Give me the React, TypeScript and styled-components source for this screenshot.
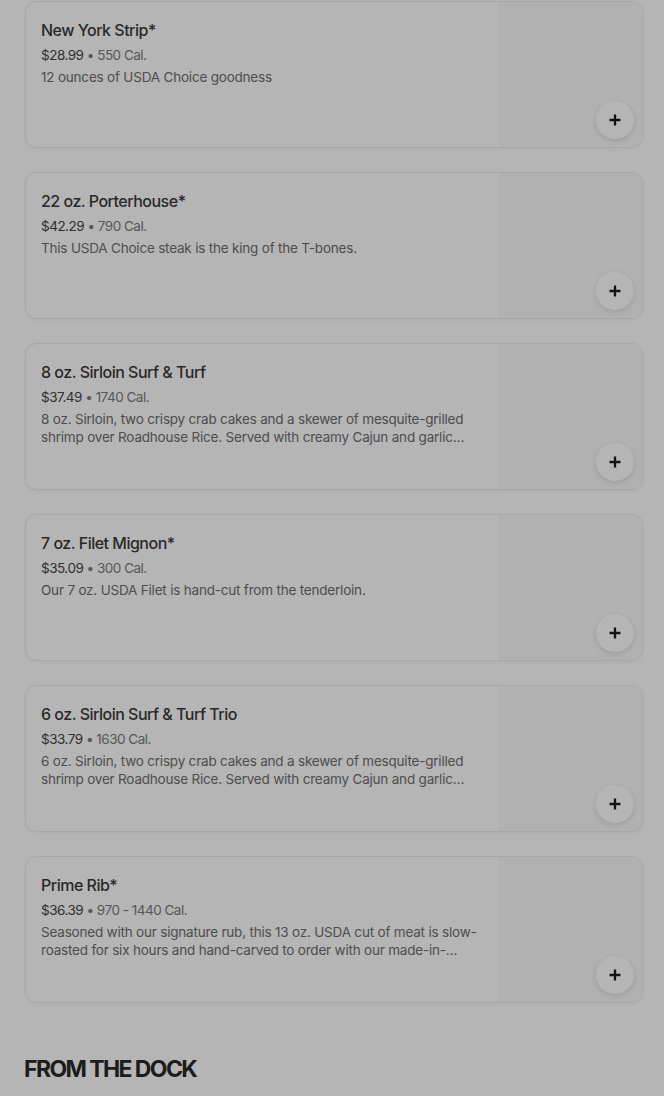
import React from "react";
import styled, { createGlobalStyle } from "styled-components";

const Global = createGlobalStyle`
  html, body { margin: 0; padding: 0; background: #ffffff; }
  body { font-family: Inter, "Noto Sans", Roboto, sans-serif; -webkit-font-smoothing: antialiased; }
`;

const Page = styled.main`
  width: 664px;
  padding: 1px 21px 40px 25px;
  box-sizing: border-box;
  display: flex;
  flex-direction: column;
  gap: 24px;
`;

const Card = styled.article`
  display: flex;
  height: 147px;
  box-sizing: border-box;
  border: 1px solid #ececec;
  border-radius: 12px;
  box-shadow: 0 1px 4px rgba(0, 0, 0, 0.05);
  background: #ffffff;
  overflow: hidden;
  position: relative;
`;

const Info = styled.div`
  flex: 1;
  min-width: 0;
  padding: 16px 16px 0 15px;
  display: flex;
  flex-direction: column;
`;

const Title = styled.h3`
  margin: 0;
  font-size: 16px;
  line-height: 24px;
  font-weight: 500;
  color: #3a3a3a;
  letter-spacing: -0.5px;
`;

const Meta = styled.div`
  margin-top: 4px;
  font-size: 13.5px;
  line-height: 18px;
  color: #7c7c7c;
  letter-spacing: -0.5px;
`;

const Price = styled.span`
  color: #444444;
`;

const Desc = styled.p`
  margin: 4px 0 0;
  font-size: 13.5px;
  line-height: 18px;
  color: #6e6e6e;
  letter-spacing: -0.2px;
  display: -webkit-box;
  -webkit-line-clamp: 2;
  -webkit-box-orient: vertical;
  overflow: hidden;
`;

const Thumb = styled.div`
  width: 142px;
  flex-shrink: 0;
  background: #fafafa;
  border-left: 1px solid #f4f4f4;
`;

const AddButton = styled.button`
  position: absolute;
  right: 8px;
  bottom: 8px;
  width: 38px;
  height: 38px;
  border-radius: 50%;
  border: none;
  background: #ffffff;
  box-shadow: 0 2px 6px rgba(0, 0, 0, 0.12);
  display: flex;
  align-items: center;
  justify-content: center;
  padding: 0;
  cursor: pointer;
`;

const Section = styled.h2`
  margin: 27px 0 0 -1px;
  font-family: Inter, "Noto Sans", sans-serif;
  font-size: 23px;
  line-height: 30px;
  font-weight: 700;
  letter-spacing: -1.6px;
  color: #2a2a2a;
`;

const Backdrop = styled.div`
  position: fixed;
  inset: 0;
  background: rgba(0, 0, 0, 0.29);
`;

type Item = { name: string; price: string; cal: string; desc: string };

const items: Item[] = [
  { name: "New York Strip*", price: "$28.99", cal: "550 Cal.", desc: "12 ounces of USDA Choice goodness" },
  { name: "22 oz. Porterhouse*", price: "$42.29", cal: "790 Cal.", desc: "This USDA Choice steak is the king of the T-bones." },
  {
    name: "8 oz. Sirloin Surf & Turf",
    price: "$37.49",
    cal: "1740 Cal.",
    desc: "8 oz. Sirloin, two crispy crab cakes and a skewer of mesquite-grilled shrimp over Roadhouse Rice. Served with creamy Cajun and garlic dipping sauces.",
  },
  { name: "7 oz. Filet Mignon*", price: "$35.09", cal: "300 Cal.", desc: "Our 7 oz. USDA Filet is hand-cut from the tenderloin." },
  {
    name: "6 oz. Sirloin Surf & Turf Trio",
    price: "$33.79",
    cal: "1630 Cal.",
    desc: "6 oz. Sirloin, two crispy crab cakes and a skewer of mesquite-grilled shrimp over Roadhouse Rice. Served with creamy Cajun and garlic dipping sauces.",
  },
  {
    name: "Prime Rib*",
    price: "$36.39",
    cal: "970 - 1440 Cal.",
    desc: "Seasoned with our signature rub, this 13 oz. USDA cut of meat is slow-roasted for six hours and hand-carved to order with our made-in-house au jus.",
  },
];

const Plus = () => (
  <svg width="12" height="12" viewBox="0 0 12 12" aria-hidden>
    <path d="M6 0.5v11M0.5 6h11" stroke="#1a1a1a" strokeWidth="2.3" strokeLinecap="butt" />
  </svg>
);

export default function App() {
  return (
    <>
      <Global />
      <Page>
        {items.map((it) => (
          <Card key={it.name}>
            <Info>
              <Title>{it.name}</Title>
              <Meta>
                <Price>{it.price}</Price> • {it.cal}
              </Meta>
              <Desc>{it.desc}</Desc>
            </Info>
            <Thumb />
            <AddButton aria-label={`Add ${it.name}`}>
              <Plus />
            </AddButton>
          </Card>
        ))}
        <Section>FROM THE DOCK</Section>
      </Page>
      <Backdrop />
    </>
  );
}
